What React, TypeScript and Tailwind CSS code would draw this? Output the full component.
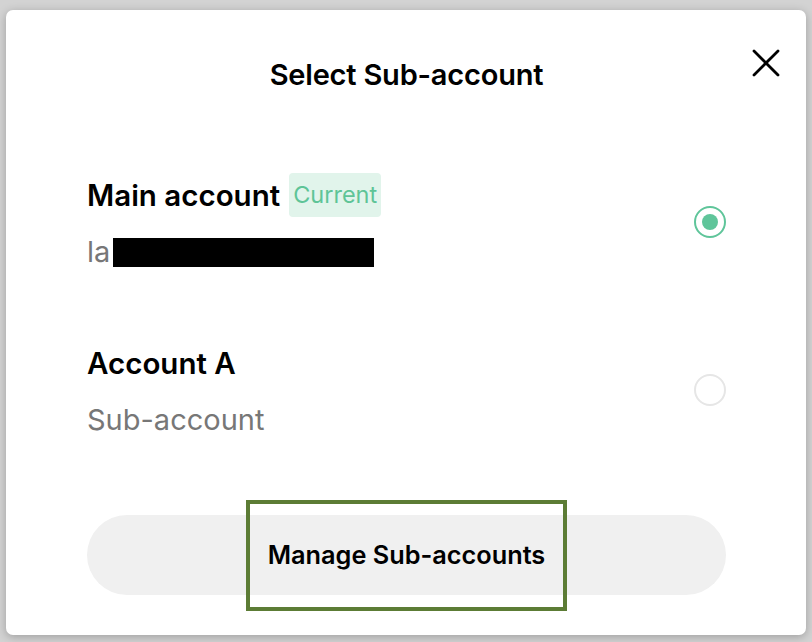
type Account = {
  name: string;
  sub: string;
  current?: boolean;
  redacted?: boolean;
};

const accounts: Account[] = [
  { name: "Main account", sub: "la", current: true, redacted: true },
  { name: "Account A", sub: "Sub-account" },
];

function Radio({ checked }: { checked?: boolean }) {
  return checked ? (
    <div className="w-8 h-8 rounded-full border-2 border-[#5fc59a] flex items-center justify-center">
      <div className="w-4 h-4 rounded-full bg-[#5fc59a]" />
    </div>
  ) : (
    <div className="w-8 h-8 rounded-full border-2 border-[#e6e6e6]" />
  );
}

export default function App() {
  return (
    <div
      className="h-[642px] w-full bg-[#d3d3d3] pt-[10px] pb-[7px] px-[6px]"
      style={{ fontFamily: "Inter, 'Noto Sans', sans-serif" }}
    >
      <div className="relative h-full bg-white rounded-[7px] shadow-[0_2px_10px_rgba(0,0,0,0.25)] pl-[81px] pr-[80px] pt-[47px]">
        {/* Header */}
        <button aria-label="Close" className="absolute top-[39px] right-[26px]">
          <svg width="28" height="28" viewBox="0 0 28 28" fill="none" stroke="black" strokeWidth="2.8" strokeLinecap="round">
            <path d="M2 2 L26 26 M26 2 L2 26" />
          </svg>
        </button>
        <h2 className="text-center text-[29px] leading-[36px] font-semibold text-black tracking-[-0.2px]">
          Select Sub-account
        </h2>

        {/* Account list */}
        <div className="mt-[80px] flex flex-col gap-[71px]">
          {accounts.map((a) => (
            <div key={a.name} className="flex items-center justify-between">
              <div className="flex flex-col">
                <div className="flex items-center h-[44px]">
                  <span className="text-[29.5px] font-semibold text-black">{a.name}</span>
                  {a.current && (
                    <span className="ml-[9px] h-[44px] px-[4px] flex items-center rounded-[4px] bg-[#e1f4eb] text-[#5ec497] text-[23.5px]">
                      Current
                    </span>
                  )}
                </div>
                <div className="mt-[17px] flex items-center h-[36px] text-[29px] text-[#777777]">
                  <span>{a.sub}</span>
                  {a.redacted && <span className="ml-[3px] inline-block w-[261px] h-[29px] bg-black" />}
                </div>
              </div>
              <Radio checked={a.current} />
            </div>
          ))}
        </div>

        {/* Manage button */}
        <div className="relative mt-[77px]">
          <button className="w-full h-[80px] rounded-full bg-[#f0f0f0] text-[25.3px] font-semibold text-black">
            Manage Sub-accounts
          </button>
          <div className="absolute left-[159px] top-[-15px] w-[321px] h-[111px] border-4 border-[#5c7c35] pointer-events-none" />
        </div>
      </div>
    </div>
  );
}
